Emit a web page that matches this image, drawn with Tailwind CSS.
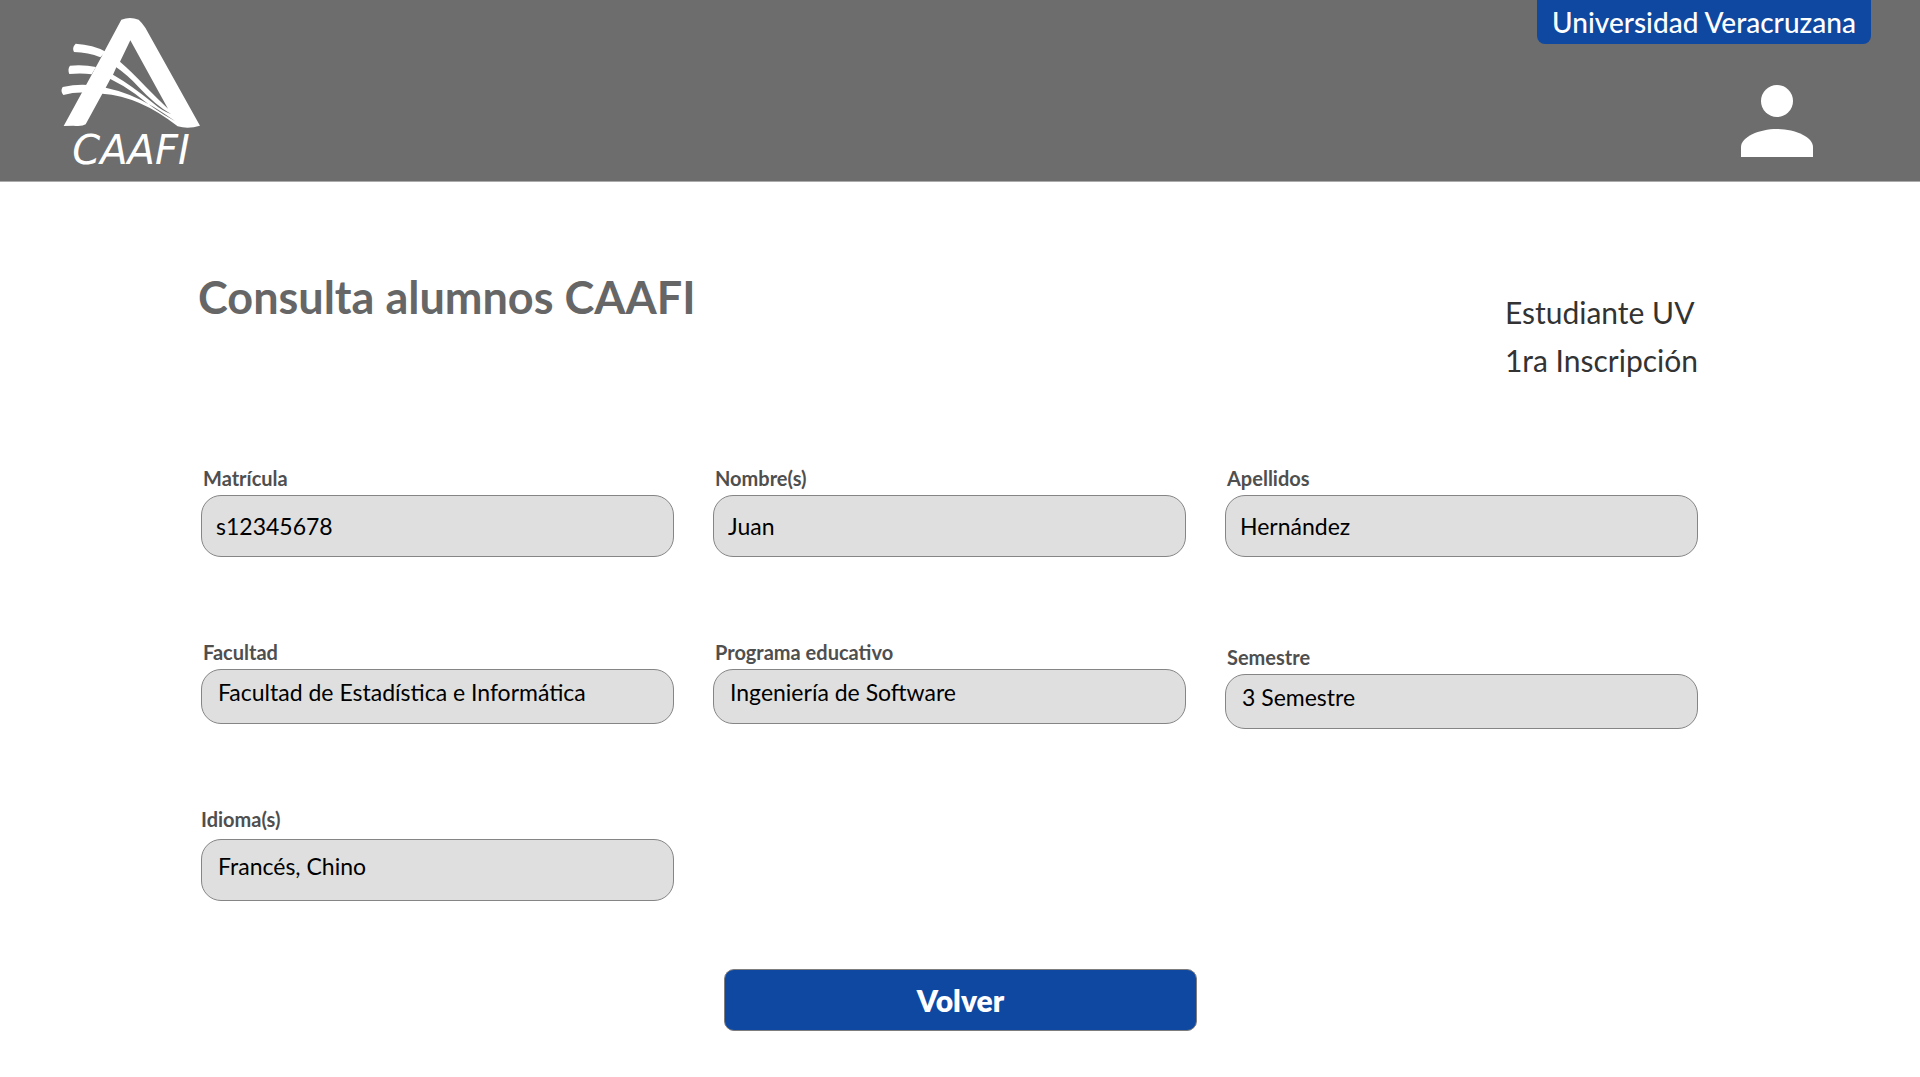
<!DOCTYPE html>
<html lang="es">
<head>
<meta charset="utf-8">
<meta name="viewport" content="width=device-width, initial-scale=1">
<title>Consulta alumnos CAAFI</title>
<script src="https://cdn.jsdelivr.net/npm/@tailwindcss/browser@4"></script>
</head>
<body class="bg-white font-['Lato',sans-serif] text-black">
<header class="flex h-[182px] items-start justify-between border-b border-[#ababab] bg-[#6d6d6d] pr-[49px] pl-[60px]">
  <a href="#" class="mt-4 flex flex-col items-center gap-0.5 text-white">
    <svg class="h-[112px] w-[142px]" viewBox="60 48 426 336" fill="#fff" aria-hidden="true">
      <path fill-rule="evenodd" d="M71 378L178 182L244 59Q270 49 296 59Q306 68 316 83L480 377Q445 388 413 379Q300 289 187 281L137 373Q127 380 100 377Z
        M271 121L240 185Q276 216 315 258Q350 294 384 326Z
        M229 202Q262 225 295 260Q345 314 394 343Q365 332 340 310Q275 256 219 224Z
        M211 237Q250 256 285 281Q345 330 406 364Q370 338 340 320Q270 278 197 263Z"/>
      <path d="M107 131Q160 134 197 155L181 172Q145 157 102 156Q95 143 107 131Z"/>
      <path d="M90 197Q135 194 168 201L155 223Q125 218 88 222Q82 207 90 197Z"/>
      <path d="M68 261Q110 252 145 255L135 278Q105 276 70 285Q60 273 68 261Z"/>
    </svg>
    <span class="font-['DejaVu_Sans',sans-serif] text-[40px] leading-10 italic">CAAFI</span>
  </a>
  <div class="flex w-[334px] flex-col">
    <p class="h-11 rounded-b-lg bg-[#0f48a1] text-center text-[28px] leading-11 font-medium text-white">Universidad Veracruzana</p>
    <button type="button" aria-label="Perfil" class="mt-[41px] mr-[58px] self-end">
      <svg class="size-[72px]" viewBox="0 0 72 72" fill="#fff"><circle cx="36" cy="16" r="16"/><path d="M0 72V62C0 52 18 44 36 44S72 52 72 62V72Z"/></svg>
    </button>
  </div>
</header>
<main class="pr-[222px] pl-[198px]">
  <div class="flex items-start justify-between">
    <h1 class="mt-[87px] text-[45px] leading-[56px] font-bold text-[#666]">Consulta alumnos CAAFI</h1>
    <p class="mt-[106px] text-[30px] leading-[48px] text-[#333]">Estudiante UV<br>1ra Inscripción</p>
  </div>
  <form class="pl-[3px]">
    <div class="mt-[82px] grid grid-cols-3 items-start gap-x-[39px]">
      <div class="flex flex-col">
        <label for="matricula" class="h-[29px] pl-0.5 text-[20px] leading-6 font-bold text-[#4f4f4f]">Matrícula</label>
        <input id="matricula" readonly value="s12345678" class="h-[62px] w-full rounded-[20px] border border-[#858585] bg-[#dfdfdf] px-3.5 text-[23px] outline-none">
      </div>
      <div class="flex flex-col">
        <label for="nombre" class="h-[29px] pl-0.5 text-[20px] leading-6 font-bold text-[#4f4f4f]">Nombre(s)</label>
        <input id="nombre" readonly value="Juan" class="h-[62px] w-full rounded-[20px] border border-[#858585] bg-[#dfdfdf] px-3.5 text-[23px] outline-none">
      </div>
      <div class="flex flex-col">
        <label for="apellidos" class="h-[29px] pl-0.5 text-[20px] leading-6 font-bold text-[#4f4f4f]">Apellidos</label>
        <input id="apellidos" readonly value="Hernández" class="h-[62px] w-full rounded-[20px] border border-[#858585] bg-[#dfdfdf] px-3.5 text-[23px] outline-none">
      </div>
    </div>
    <div class="mt-[83px] grid grid-cols-3 items-start gap-x-[39px]">
      <div class="flex flex-col">
        <label for="facultad" class="h-[29px] pl-0.5 text-[20px] leading-6 font-bold text-[#4f4f4f]">Facultad</label>
        <input id="facultad" readonly value="Facultad de Estadística e Informática" class="h-[55px] w-full rounded-[20px] border border-[#858585] bg-[#dfdfdf] px-4 pb-2.5 text-[23px] outline-none">
      </div>
      <div class="flex flex-col">
        <label for="programa" class="h-[29px] pl-0.5 text-[20px] leading-6 font-bold text-[#4f4f4f]">Programa educativo</label>
        <input id="programa" readonly value="Ingeniería de Software" class="h-[55px] w-full rounded-[20px] border border-[#858585] bg-[#dfdfdf] px-4 pb-2.5 text-[23px] outline-none">
      </div>
      <div class="flex flex-col pt-[5px]">
        <label for="semestre" class="h-[29px] pl-0.5 text-[20px] leading-6 font-bold text-[#4f4f4f]">Semestre</label>
        <input id="semestre" readonly value="3 Semestre" class="h-[55px] w-full rounded-[20px] border border-[#858585] bg-[#dfdfdf] px-4 pb-2.5 text-[23px] outline-none">
      </div>
    </div>
    <div class="mt-[78px] grid grid-cols-3 items-start gap-x-[39px]">
      <div class="flex flex-col">
        <label for="idioma" class="h-8 text-[20px] leading-6 font-bold text-[#4f4f4f]">Idioma(s)</label>
        <input id="idioma" readonly value="Francés, Chino" class="h-[62px] w-full rounded-[20px] border border-[#858585] bg-[#dfdfdf] px-4 pb-2 text-[23px] outline-none">
      </div>
    </div>
    <div class="mt-[68px] grid grid-cols-3 gap-x-[39px] pb-11">
      <button type="button" class="col-start-2 ml-[11px] -mr-[11px] h-[62px] rounded-[10px] border border-[#7d7d7d] bg-[#0f48a1] text-[30px] font-extrabold text-white">Volver</button>
    </div>
  </form>
</main>
</body>
</html>
